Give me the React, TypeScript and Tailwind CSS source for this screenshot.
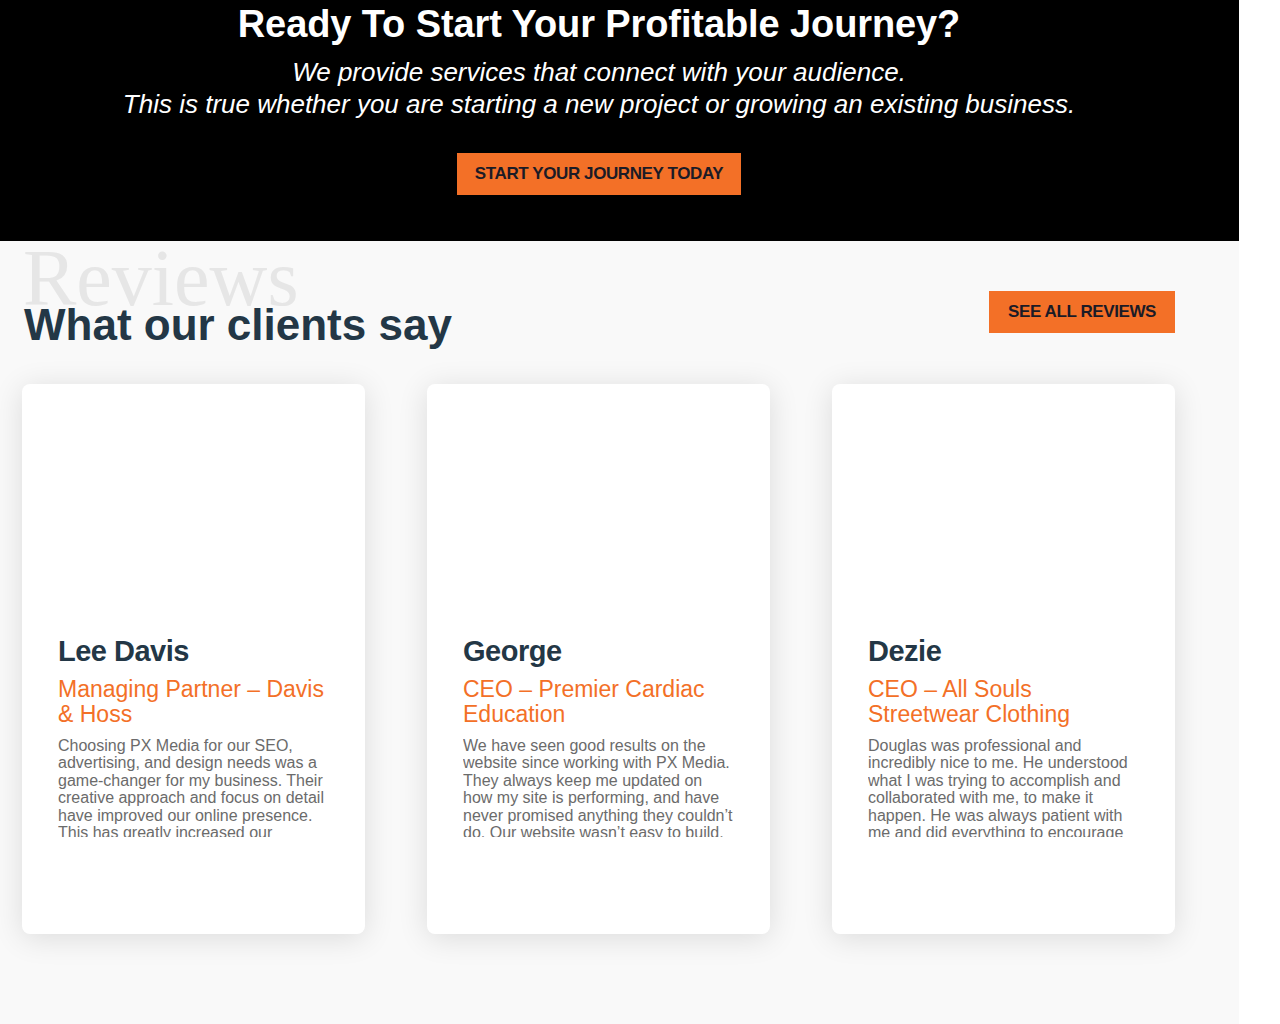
import React from "react";

const reviews = [
  {
    name: "Lee Davis",
    role: "Managing Partner – Davis & Hoss",
    text: "Choosing PX Media for our SEO, advertising, and design needs was a game-changer for my business. Their creative approach and focus on detail have improved our online presence. This has greatly increased our visibility and helped us reach more clients than ever before.",
  },
  {
    name: "George",
    role: "CEO – Premier Cardiac Education",
    text: "We have seen good results on the website since working with PX Media. They always keep me updated on how my site is performing, and have never promised anything they couldn’t do. Our website wasn’t easy to build, but they made it happen.",
  },
  {
    name: "Dezie",
    role: "CEO – All Souls Streetwear Clothing",
    text: "Douglas was professional and incredibly nice to me. He understood what I was trying to accomplish and collaborated with me, to make it happen. He was always patient with me and did everything to encourage my vision.",
  },
];

export default function App() {
  return (
    <div className="min-h-screen w-full bg-white" style={{ fontFamily: '"Liberation Sans", Arial, sans-serif' }}>
      <div className="w-[1239px] flex flex-col min-h-[1024px]">
        <section className="bg-black h-[241px] w-full">
          <div className="w-[1198px] flex flex-col items-center">
            <h1 className="text-white text-[38px] font-bold leading-[48px] tracking-[-0.1px] text-center">
              Ready To Start Your Profitable Journey?
            </h1>
            <p className="mt-2 text-white italic text-[26px] leading-[32px] text-center">
              We provide services that connect with your audience.
              <br />
              This is true whether you are starting a new project or growing an existing business.
            </p>
            <button className="mt-[33px] h-[42px] px-[18px] bg-[#f37027] text-[#1b1b26] text-[17px] font-bold tracking-[-0.4px] uppercase">
              Start Your Journey Today
            </button>
          </div>
        </section>
        <section className="bg-[#f9f9f9] flex-1 w-full">
          <div className="ml-[22px] w-[1153px]">
            <div className="flex justify-between items-start">
              <div className="flex flex-col">
                <div
                  className="-mt-[3px] -mb-[19px] ml-[1px] text-[80px] leading-none text-[#e6e6e6]"
                  style={{ fontFamily: '"Liberation Serif", "Times New Roman", serif' }}
                >
                  Reviews
                </div>
                <h2 className="ml-[2px] text-[44px] font-bold leading-[1.2] text-[#233746]">What our clients say</h2>
              </div>
              <button className="mt-[50px] h-[42px] px-[19px] bg-[#f37027] text-[#1b1b26] text-[17px] font-bold tracking-[-0.4px] uppercase">
                See All Reviews
              </button>
            </div>
            <div className="mt-[32px] grid grid-cols-3 gap-[62px]">
              {reviews.map((r) => (
                <div
                  key={r.name}
                  className="h-[550px] bg-white rounded-lg shadow-[0_4px_30px_rgba(0,0,0,0.12)] pt-[250px] px-[36px]"
                >
                  <div className="text-[29px] font-bold leading-[1.2] tracking-[-0.5px] text-[#233746]">{r.name}</div>
                  <div className="mt-[8px] text-[23px] leading-[25px] text-[#f37027]">{r.role}</div>
                  <div className="mt-[10px] h-[100px] overflow-hidden text-[16px] leading-[17.5px] text-[#6b6b6b]">
                    {r.text}
                  </div>
                </div>
              ))}
            </div>
          </div>
        </section>
      </div>
    </div>
  );
}
